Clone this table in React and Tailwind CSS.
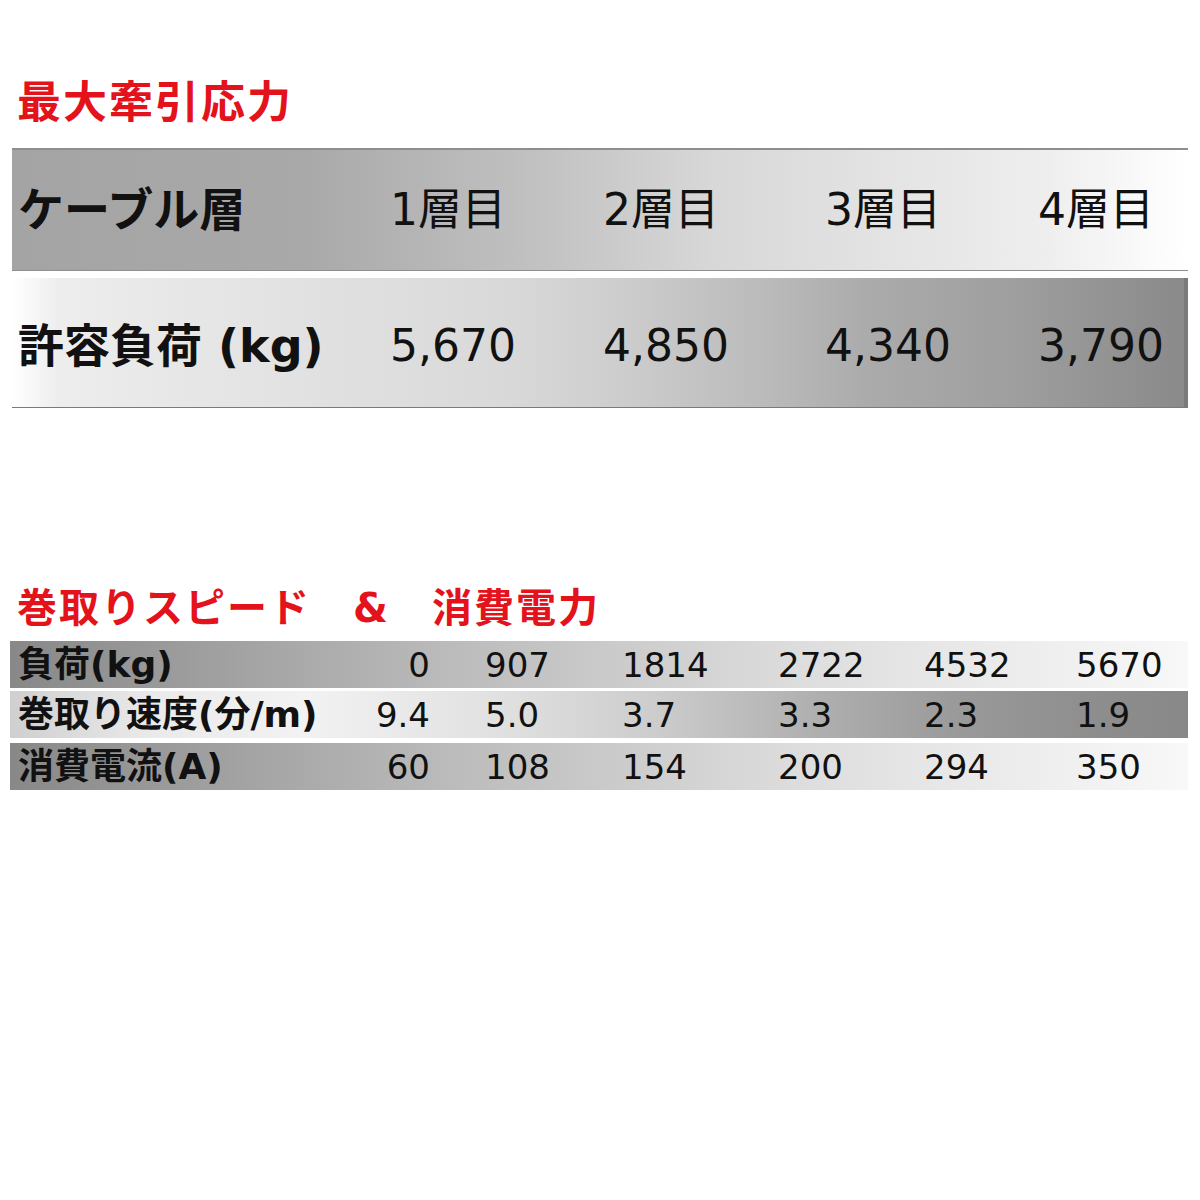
const FONT = { fontFamily: '"DejaVu Sans", "Noto Sans CJK JP", sans-serif' };

const layers = ['1層目', '2層目', '3層目', '4層目'];
const loads = ['5,670', '4,850', '4,340', '3,790'];

const speedRows = [
  { label: '負荷(kg)', values: ['0', '907', '1814', '2722', '4532', '5670'], dark: true },
  { label: '巻取り速度(分/m)', values: ['9.4', '5.0', '3.7', '3.3', '2.3', '1.9'], dark: false },
  { label: '消費電流(A)', values: ['60', '108', '154', '200', '294', '350'], dark: true },
];

const App = () => {
  return (
    <div className="w-[1200px] h-[1200px] bg-white text-[#111] flex flex-col" style={FONT}>
      <h1 className="pt-[81px] pl-[17px] text-[44px] leading-none font-bold tracking-[2px] text-[#e3121b]">
        最大牽引応力
      </h1>

      <div className="mt-[23px] ml-[12px] w-[1176px] flex flex-col gap-[7px]">
        <div className="h-[123px] grid grid-cols-[378px_213px_222px_213px_1fr] items-center border-t-2 border-b border-[#8e8e8e] bg-[linear-gradient(to_right,#a4a4a4_0%,#a9a9a9_25%,#c2c2c2_45%,#d8d8d8_60%,#e4e4e4_75%,#eeeeee_88%,#ffffff_100%)]">
          <div className="pl-[6px] text-[46px] font-bold leading-none">ケーブル層</div>
          {layers.map((l) => (
            <div key={l} className="text-[44px] leading-none">{l}</div>
          ))}
        </div>

        <div className="h-[130px] grid grid-cols-[378px_213px_222px_213px_1fr] items-center pt-[6px] border-b border-r-4 border-[#7a7a7a] bg-[linear-gradient(to_right,#ffffff_0%,#ededed_4%,#e5e5e5_18%,#d9d9d9_42%,#cdcdcd_52%,#bbbbbb_64%,#ababab_73%,#9f9f9f_85%,#8a8a8a_100%)]">
          <div className="pl-[6px] text-[46px] font-bold leading-none">許容負荷 (kg)</div>
          {loads.map((v) => (
            <div key={v} className="text-[44px] leading-none">{v}</div>
          ))}
        </div>
      </div>

      <h2 className="mt-[180px] pl-[17px] text-[40px] leading-none font-bold tracking-[2px] text-[#e3121b] whitespace-pre">
        巻取りスピード　&amp;　消費電力
      </h2>

      <div className="mt-[13px] ml-[10px] w-[1178px] flex flex-col">
        {speedRows.map((row, i) => (
          <div
            key={row.label}
            className={`h-[47px] grid grid-cols-[355px_120px_137px_156px_146px_152px_1fr] items-center ${
              i === 1 ? 'mt-[3px]' : i === 2 ? 'mt-[5px]' : ''
            } ${
              row.dark
                ? 'bg-[linear-gradient(to_right,#888888_0%,#9a9a9a_13%,#aaaaaa_25%,#bcbcbc_38%,#cfcfcf_55%,#dedede_68%,#ececec_85%,#f8f8f8_100%)]'
                : 'bg-[linear-gradient(to_right,#cfcfcf_0%,#eaeaea_12%,#f2f2f2_25%,#e0e0e0_42%,#cccccc_55%,#b0b0b0_68%,#999999_81%,#8d8d8d_93%,#888888_100%)]'
            }`}
          >
            <div className="pl-[8px] text-[36px] font-bold leading-none">{row.label}</div>
            {row.values.map((v, j) => (
              <div
                key={j}
                className={`text-[34px] leading-none ${j === 0 ? 'text-right pr-[55px]' : ''}`}
              >
                {v}
              </div>
            ))}
          </div>
        ))}
      </div>
    </div>
  );
};

export default App;
